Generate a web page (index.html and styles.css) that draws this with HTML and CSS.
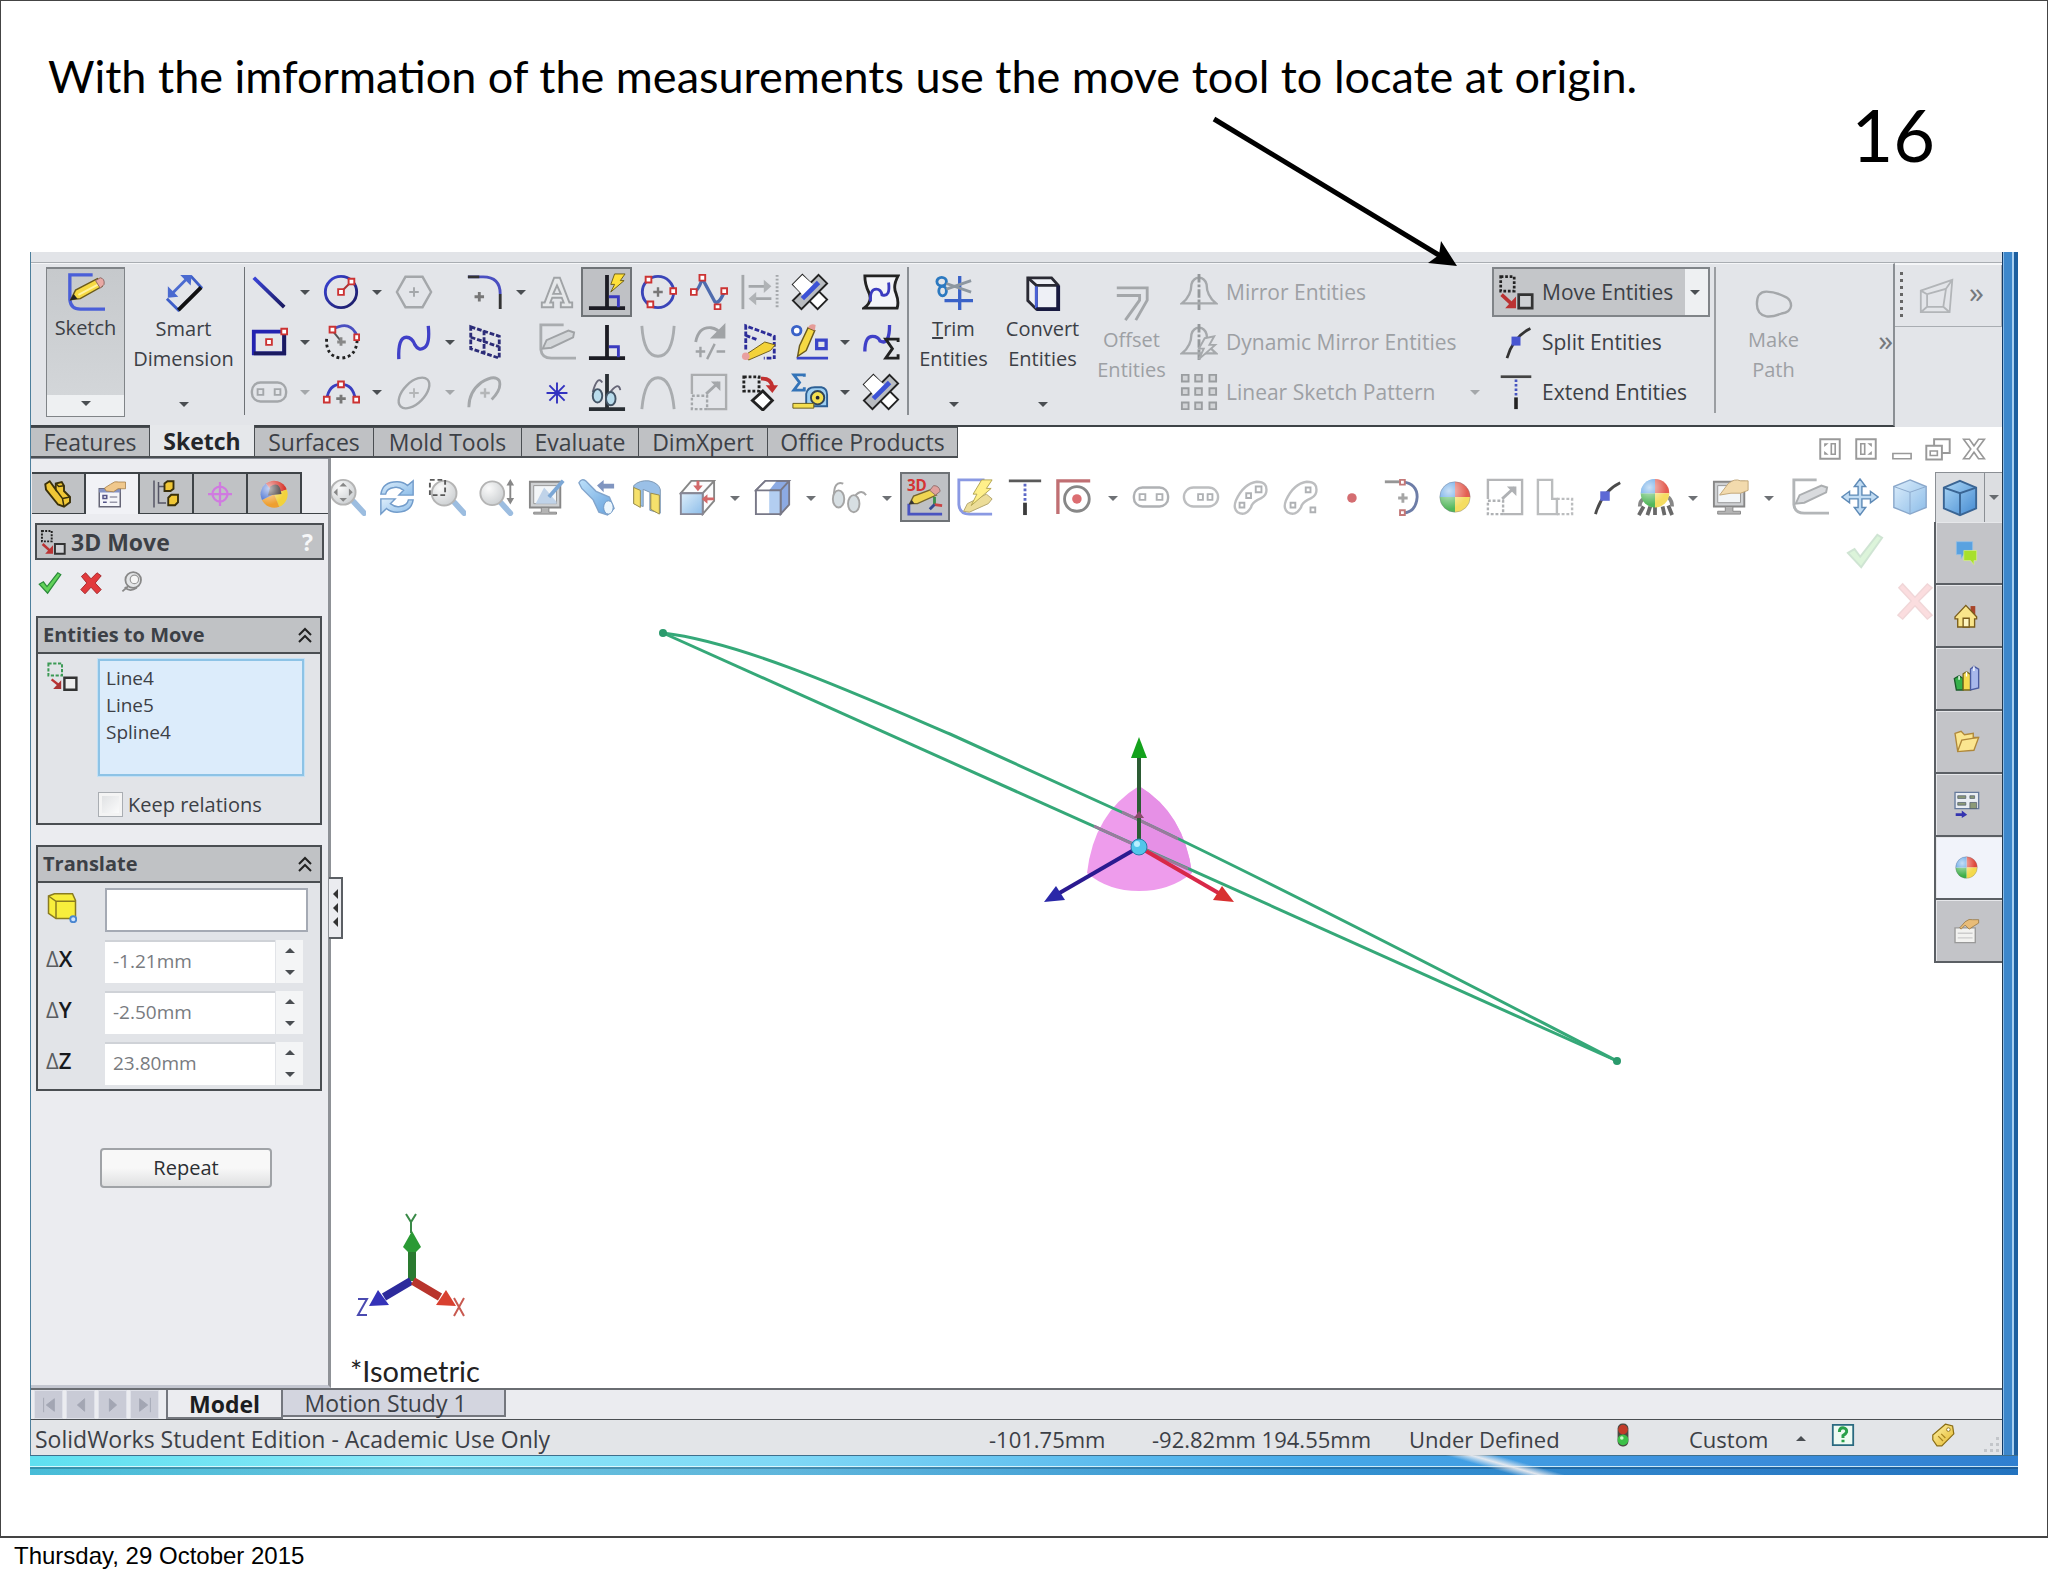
FILE: index.html
```html
<!DOCTYPE html>
<html lang="en">
<head>
<meta charset="utf-8">
<title>Move tool – slide 16</title>
<link rel="stylesheet" href="styles.css">
</head>
<body>
<svg class="sprite" aria-hidden="true">
  <defs>
    <linearGradient id="gBlue" x1="0" y1="0" x2="1" y2="1"><stop offset="0" stop-color="#d9ecfb"/><stop offset="1" stop-color="#7db4e6"/></linearGradient>
    <linearGradient id="gDeep" x1="0" y1="0" x2="1" y2="1"><stop offset="0" stop-color="#a8d8fa"/><stop offset="1" stop-color="#2f7fd0"/></linearGradient>
    <linearGradient id="gYel" x1="0" y1="0" x2="1" y2="1"><stop offset="0" stop-color="#fff4a8"/><stop offset="1" stop-color="#e3b62a"/></linearGradient>
    <linearGradient id="gInk" x1="0" y1="0" x2="1" y2="1"><stop offset="0" stop-color="#3a44d8"/><stop offset="1" stop-color="#1a1a60"/></linearGradient>
    <radialGradient id="gLens" cx=".35" cy=".3" r=".8"><stop offset="0" stop-color="#fafafa"/><stop offset="1" stop-color="#c2c6c9"/></radialGradient>
    <radialGradient id="gShine" cx=".3" cy=".3" r=".6"><stop offset="0" stop-color="#fff" stop-opacity=".7"/><stop offset="1" stop-color="#fff" stop-opacity="0"/></radialGradient>
  </defs>
  <symbol id="pencil" viewBox="0 0 40 40"><path d="M2 28 7 18 29 7 34 15 12 26Z" fill="#f6d943" stroke="#6b5a1a" stroke-width="1.5"/><path d="M10 22 31 11" stroke="#fff3a0" stroke-width="2"/><path d="M27 8 32 5Q38 5 38 11L33 16Z" fill="#e9a9a4" stroke="#8a6664"/><path d="M2 28 5 22 9 27Z" fill="#222"/></symbol>
  <symbol id="sketch" viewBox="0 0 40 40"><path d="M27 2H3V28Q4 38 14 38H40" fill="none" stroke="#4a5fd8" stroke-width="3.5"/><path d="M4 28 9 18 32 6 37 14 14 27Z" fill="#f6d943" stroke="#6b5a1a" stroke-width="1.500"/><path d="M12 23 33 12" stroke="#fff3a0" stroke-width="2"/><path d="M30 8 35 5Q40 6 39 12L35 16Z" fill="#e9a9a4" stroke="#8a6664"/><path d="M3 29 7 22 11 27Z" fill="#222"/></symbol>
  <symbol id="dim" viewBox="0 0 40 40"><path d="M27 2 38 14 14 38 2 26" fill="none" stroke="#3f5fc8" stroke-width="3"/><path d="M38 14 14 38" stroke="#111" stroke-width="4"/><path d="M6 22 24 4" stroke="#4a6ad0" stroke-width="3"/><path d="M3 25V13L14 24ZM28 1H16L27 12Z" fill="#4a6ad0"/></symbol>
  <symbol id="line" viewBox="0 0 40 40"><path d="M4 5 36 36" stroke="url(#gInk)" stroke-width="4"/></symbol>
  <symbol id="circle" viewBox="0 0 40 40"><circle cx="20" cy="20" r="16.500" fill="none" stroke="url(#gInk)" stroke-width="3"/><path d="m20 20 10-10" stroke="#a33" stroke-width="2"/><g fill="#fff" stroke="#c33" stroke-width="2"><path d="M17 17h6v6h-6zM28 6h6v6h-6z"/></g></symbol>
  <symbol id="hex" viewBox="0 0 40 40"><path d="M11 4h18l9 16-9 16H11L2 20Z" fill="none" stroke="#a4a7aa" stroke-width="2.500"/><path d="M20 15v10M15 20h10" stroke="#a4a7aa" stroke-width="2"/></symbol>
  <symbol id="fillet" viewBox="0 0 40 40"><path d="M2 4H18Q36 4 36 22" fill="none" stroke="#4a4fc0" stroke-width="3"/><path d="M2 4H14M36 22V38" stroke="#333" stroke-width="3"/><path d="M14 20v10M9 25h10" stroke="#777" stroke-width="3"/></symbol>
  <symbol id="letter" viewBox="0 0 40 40"><path d="M17 5h6l10 26h3v5H24v-5h3l-2-5H15l-2 5h3v5H4v-5h3ZM20 13l-4 9h8Z" fill="#e6e8ea" stroke="#a0a3a6" stroke-width="2"/></symbol>
  <symbol id="perp" viewBox="0 0 40 40"><path d="M20 2V37M1 37H39" stroke="#1c1c24" stroke-width="4" fill="none"/><path d="M22 25H32V36" fill="none" stroke="#3b3bc0" stroke-width="3"/></symbol>
  <symbol id="perpq" viewBox="0 0 40 40"><path d="M20 2V37M1 37H39" stroke="#1c1c24" stroke-width="4" fill="none"/><path d="M22 25H32V36" fill="none" stroke="#3b3bc0" stroke-width="3"/><path d="M28 1H39L34 8H38L24 20 28 12H24Z" fill="#ffe13a" stroke="#6b5d14"/></symbol>
  <symbol id="circ3" viewBox="0 0 40 40"><circle cx="20" cy="20" r="16.500" fill="none" stroke="#3a45b8" stroke-width="3"/><path d="M20 15v10M15 20h10" stroke="#777" stroke-width="2.500"/><g fill="#fff" stroke="#c33" stroke-width="2"><path d="M7 4h6v6H7zM33 16h6v6h-6zM9 30h6v6H9z"/></g></symbol>
  <symbol id="poly" viewBox="0 0 40 40"><path d="M4 20Q8 20 13 6L26 30Q30 34 36 20" fill="none" stroke="#4f6cae" stroke-width="3.500"/><g fill="#fff" stroke="#c33" stroke-width="2"><path d="M1 17h6v6H1zM10 2h6v6h-6zM26 33h6v5h-6zM33 16h6v6h-6z"/></g></symbol>
  <symbol id="flip" viewBox="0 0 40 40"><path d="M2 2V38" stroke="#a4a7aa" stroke-width="3"/><path d="M38 2V38" stroke="#a4a7aa" stroke-width="3" stroke-dasharray="2 2"/><path d="M8 14H26M14 27H32" stroke="#a4a7aa" stroke-width="3"/><path d="M24 7 32 14 24 21ZM16 20 8 27 16 34Z" fill="#b0b3b6"/></symbol>
  <symbol id="cross" viewBox="0 0 40 40"><path d="M12 2 38 28 28 38 2 12Z" fill="#fff" stroke="#222" stroke-width="2"/><path d="M29 2 38 11 11 38 2 29Z" fill="#b9bcc0" stroke="#222" stroke-width="2"/><path d="M12 2 24 13 13 24 2 12Z" fill="#fff"/><path d="M12 27 29 10" stroke="#3c52d6" stroke-width="5"/></symbol>
  <symbol id="surf" viewBox="0 0 40 40"><path d="M3 3H38Q32 14 36 22 39 30 37 37H2Q12 30 7 20 3 12 3 3Z" fill="#f3f4f8" stroke="#222" stroke-width="3"/><path d="M9 30Q8 17 15 17 20 17 21 23 30 26 28 10" fill="none" stroke="#3b3bc0" stroke-width="3"/></symbol>
  <symbol id="rect" viewBox="0 0 40 40"><path d="M4 9H36V32H4Z" fill="none" stroke="#2323b0" stroke-width="4"/><path d="M4 32H36V9" fill="none" stroke="#1a1a60" stroke-width="4"/><g fill="#fff" stroke="#c33" stroke-width="2"><path d="M17 17h6v6h-6zM33 6h6v6h-6z"/></g></symbol>
  <symbol id="carc" viewBox="0 0 40 40"><path d="M11 7Q30-4 37 14" fill="none" stroke="#4a4fc0" stroke-width="3"/><path d="M37 18Q36 36 20 37 3 35 5 15" fill="none" stroke="#222" stroke-width="3" stroke-dasharray="3 3"/><path d="M11 8 20 19" stroke="#555" stroke-width="2"/><path d="M20 15v9M16 20h9" stroke="#888" stroke-width="3"/><g fill="#fff" stroke="#c33" stroke-width="2"><path d="M8 4h6v6H8zM34 12h5v6h-5z"/></g></symbol>
  <symbol id="spline" viewBox="0 0 40 40"><path d="M4 38Q3 15 12 15 18 15 21 23 25 30 31 26 37 22 35 3" fill="none" stroke="#4040c8" stroke-width="3.500"/></symbol>
  <symbol id="plane" viewBox="0 0 40 40"><path d="M5 4 35 14V37L5 27ZM5 15 35 25M19 8V32" fill="none" stroke="#2c2c78" stroke-width="3" stroke-dasharray="5 2"/></symbol>
  <symbol id="sketchg" viewBox="0 0 40 40"><path d="M27 2H3V28Q4 37 14 37H40" fill="none" stroke="#a9acaf" stroke-width="3"/><path d="M5 27 9 18 32 8 38 10 37 15 14 26Z" fill="#d4d7da" stroke="#a0a3a6" stroke-width="2"/></symbol>
  <symbol id="ucurve" viewBox="0 0 40 40"><path d="M3 3Q5 35 20 35T37 3" fill="none" stroke="#a9acaf" stroke-width="3"/></symbol>
  <symbol id="ncurve" viewBox="0 0 40 40"><path d="M3 38Q6 5 20 5T37 38" fill="none" stroke="#a9acaf" stroke-width="3"/></symbol>
  <symbol id="plusminus" viewBox="0 0 40 40"><path d="M6 20Q9 4 22 5 29 6 33 12" fill="none" stroke="#a0a3a6" stroke-width="3"/><path d="M36 3V15H24ZM6 30H16M11 25V36M18 38 26 22M28 30H37" fill="#a0a3a6" stroke="#a0a3a6" stroke-width="2.500"/></symbol>
  <symbol id="planepen" viewBox="0 0 40 40"><path d="M5 28V3L35 14V38M5 13 18 18M32 37H24" fill="none" stroke="#2c2c98" stroke-width="3" stroke-dasharray="5 2"/><path d="M4 34 25 20 36 23 31 29 8 39Z" fill="#f3d23a" stroke="#6b5a1a"/><circle cx="5" cy="35" r="4" fill="#e9a0a0"/></symbol>
  <symbol id="rapid" viewBox="0 0 40 40"><circle cx="6" cy="8" r="4.500" fill="#fff" stroke="#3a62c8" stroke-width="3"/><path d="M27 18H37V27H27Z" fill="none" stroke="#3a45c8" stroke-width="3.500"/><path d="M6 37H39" stroke="#3a45c8" stroke-width="3"/><path d="M7 35 9 24 18 5 25 8 16 29Z" fill="#f6d943" stroke="#6b5a1a" stroke-width="1.500"/><path d="M18 5Q20 0 26 2L25 8Z" fill="#e59c98"/></symbol>
  <symbol id="splsum" viewBox="0 0 40 40"><path d="M3 30Q3 14 11 14 17 14 19 19 29 24 29 2" fill="none" stroke="#4040c8" stroke-width="3.500"/><path d="M38 20V17H25L32 27 25 37H38V33" fill="none" stroke="#222" stroke-width="3"/></symbol>
  <symbol id="slot" viewBox="0 0 40 40"><rect x="2" y="10" width="36" height="20" rx="9" fill="none" stroke="#a4a7aa" stroke-width="2.500"/><path d="M8 17h6v6H8zM26 17h6v6h-6z" fill="none" stroke="#a4a7aa" stroke-width="2"/></symbol>
  <symbol id="slot2" viewBox="0 0 40 40"><rect x="2" y="10" width="36" height="20" rx="10" fill="none" stroke="#b4b6b8" stroke-width="2.500"/><path d="M17 17h5v6h-5zM27 17h5v6h-5z" fill="none" stroke="#a4a7aa" stroke-width="2"/></symbol>
  <symbol id="slot3" viewBox="0 0 40 40"><path d="M4 24Q12 6 26 4 38 4 36 15 35 20 27 23 21 26 20 31 14 41 6 36 1 32 4 24Z" fill="none" stroke="#b4b6b8" stroke-width="2.500"/><path d="M25 9h6v6h-6zM15 16h5v5h-5zM8 26h5v5H8z" fill="none" stroke="#a4a7aa" stroke-width="2"/></symbol>
  <symbol id="slot4" viewBox="0 0 40 40"><path d="M4 24Q12 6 26 4 38 4 36 15 35 20 27 23 21 26 20 31 14 41 6 36 1 32 4 24Z" fill="none" stroke="#b4b6b8" stroke-width="2.500"/><path d="M25 10h5v5h-5zM9 26h5v5H9zM30 31h5v5h-5z" fill="none" stroke="#a4a7aa" stroke-width="2"/></symbol>
  <symbol id="arc3" viewBox="0 0 40 40"><path d="M5 28Q7 12 20 12T35 28" fill="none" stroke="#3a3fc0" stroke-width="3"/><path d="M20 23v9M15 27h10" stroke="#777" stroke-width="3"/><g fill="#fff" stroke="#c33" stroke-width="2"><path d="M17 9h6v6h-6zM2 25h6v6H2zM33 25h6v6h-6z"/></g></symbol>
  <symbol id="ellipse" viewBox="0 0 40 40"><ellipse cx="20" cy="21" rx="20" ry="11" transform="rotate(-45 20 21)" fill="none" stroke="#a4a7aa" stroke-width="2.500"/><path d="M20 16v10M15 21h10" stroke="#b4b6b8" stroke-width="2"/></symbol>
  <symbol id="parc" viewBox="0 0 40 40"><path d="M3 36Q3 20 16 10 30 1 35 8 38 17 27 28" fill="none" stroke="#a4a7aa" stroke-width="3"/><path d="M20 16v10M15 21h10" stroke="#b4b6b8" stroke-width="2.500"/></symbol>
  <symbol id="star" viewBox="0 0 40 40"><path d="M20 10V32M9 21H31M12 13 28 29M28 13 12 29" stroke="#3232c0" stroke-width="2"/></symbol>
  <symbol id="perpg" viewBox="0 0 40 40"><path d="M20 1V37M1 38H39" stroke="#2a2f34" stroke-width="4"/><path d="M5 20Q10 2 15 10M22 22Q32 8 34 18" fill="none" stroke="#667" stroke-width="2"/><ellipse cx="10" cy="24" rx="5" ry="7" fill="#b9dcec" stroke="#456" stroke-width="2"/><ellipse cx="24" cy="27" rx="5" ry="7" fill="#b9dcec" stroke="#456" stroke-width="2"/></symbol>
  <symbol id="scale" viewBox="0 0 40 40"><path d="M2 22V2H38V38H18" fill="none" stroke="#abadaf" stroke-width="2.500"/><path d="M2 24H18V38H2Z" fill="none" stroke="#a4a7aa" stroke-width="2.500" stroke-dasharray="3 2"/><path d="M17 22 30 10" stroke="#a4a7aa" stroke-width="3"/><path d="M22 9H32V19Z" fill="#a4a7aa"/></symbol>
  <symbol id="rotent" viewBox="0 0 40 40"><path d="M3 4H19V19H3Z" fill="none" stroke="#222" stroke-width="3" stroke-dasharray="3 2"/><path d="M21 6Q31 5 33 14" fill="none" stroke="#c23030" stroke-width="4"/><path d="M26 13H39L33 21Z" fill="#c23030"/><path d="M23 19 33 29 23 39 12 29Z" fill="#fff" stroke="#222" stroke-width="3"/></symbol>
  <symbol id="tape" viewBox="0 0 40 40"><path d="M14 4V2H3L9 10 3 18H14V15" fill="none" stroke="#3474b8" stroke-width="3"/><path d="M16 35V22Q17 15 25 15H32Q38 16 38 23V35Z" fill="#9fd0f2" stroke="#2d5f94" stroke-width="2"/><circle cx="28" cy="26" r="7" fill="#f4df50" stroke="#345" stroke-width="2"/><circle cx="28" cy="26" r="2" fill="#223"/><path d="M2 32H24V37H2Z" fill="#f4df50" stroke="#665a1a"/></symbol>
  <symbol id="trim" viewBox="0 0 40 40"><path d="M26 2V38M10 28H40" stroke="#3a62c8" stroke-width="3.500"/><ellipse cx="7" cy="8" rx="5" ry="4.500" fill="none" stroke="#2c79c0" stroke-width="3"/><ellipse cx="8" cy="18" rx="4" ry="5" fill="none" stroke="#2c79c0" stroke-width="3"/><path d="M12 10 38 19M12 16 38 7" stroke="#8d97a0" stroke-width="3"/></symbol>
  <symbol id="convert" viewBox="0 0 40 40"><path d="M4 4H29L36 12V37H13L4 28Z" fill="#eef0f6" stroke="#2a2a34" stroke-width="3"/><path d="M4 4 13 12M13 36V12H36" stroke="#2a2a34" stroke-width="3" fill="none"/><path d="M13 13V36" stroke="#4a62d8" stroke-width="3"/><path d="M36 12V37H13" fill="none" stroke="#181a40" stroke-width="4"/></symbol>
  <symbol id="offset" viewBox="0 0 40 40"><path d="M4 3H36V16L24 37M4 11H28V16L13 37" fill="none" stroke="#a4a7aa" stroke-width="3"/></symbol>
  <symbol id="mirror" viewBox="0 0 40 40"><path d="M2 32Q12 24 12 12 14 5 20 5T28 12Q28 24 38 32Z" fill="none" stroke="#a6a9ac" stroke-width="2.500"/><path d="M20 1V39" stroke="#94989b" stroke-width="3" stroke-dasharray="9 2 3 2"/></symbol>
  <symbol id="dmirror" viewBox="0 0 40 40"><path d="M2 32Q12 24 12 12 14 5 20 5T28 12Q28 24 38 32Z" fill="none" stroke="#a6a9ac" stroke-width="2.500"/><path d="M20 1V39" stroke="#94989b" stroke-width="3" stroke-dasharray="9 2 3 2"/><path d="M26 16 36 14 31 23H37L20 38 25 27H20Z" fill="#e3e5e8" stroke="#a6a9ac" stroke-width="2"/></symbol>
  <symbol id="pattern" viewBox="0 0 40 40"><path d="M2 2h7v7H2zM16 2h7v7h-7zM31 2h7v7h-7zM2 16h7v7H2zM16 16h7v7h-7zM31 16h7v7h-7zM2 31h7v7H2zM16 31h7v7h-7zM31 31h7v7h-7z" fill="#d3d5d8" stroke="#9a9da0" stroke-width="2"/></symbol>
  <symbol id="move" viewBox="0 0 40 40"><path d="M3 3H18V19H3Z" fill="none" stroke="#222" stroke-width="3" stroke-dasharray="3 2"/><path d="M4 23 16 34" stroke="#b33" stroke-width="4"/><path d="M20 25V38H8Z" fill="#b33"/><path d="M23 23H38V38H23Z" fill="#cfd1d4" stroke="#333" stroke-width="3"/></symbol>
  <symbol id="moveg" viewBox="0 0 40 40"><path d="M3 3H20V18H3Z" fill="none" stroke="#3c9a55" stroke-width="2.500" stroke-dasharray="4 2"/><path d="M7 23 17 31" stroke="#b33" stroke-width="3"/><path d="M19 24V35H9Z" fill="#a33"/><path d="M23 21H38V36H23Z" fill="#eee" stroke="#333" stroke-width="3"/></symbol>
  <symbol id="split" viewBox="0 0 40 40"><path d="M10 38Q17 14 36 5" fill="none" stroke="#333" stroke-width="3"/><path d="M15 14H25V24H15Z" fill="#4755d0"/></symbol>
  <symbol id="extend" viewBox="0 0 40 40"><path d="M3 3H37" stroke="#444" stroke-width="3"/><path d="M20 6V26" stroke="#4755c0" stroke-width="3" stroke-dasharray="3 2"/><path d="M20 26V39" stroke="#222" stroke-width="4"/></symbol>
  <symbol id="path" viewBox="0 0 40 40"><path d="M2 20Q2 7 12 7 22 7 33 13 38 16 38 22 37 29 28 30 18 34 12 33 2 31 2 20Z" fill="none" stroke="#a4a7aa" stroke-width="2.500"/></symbol>
  <symbol id="inst" viewBox="0 0 40 40"><path d="M2 14 37 2 34 38H2ZM9 18V32H27L30 12ZM2 14 9 18M27 32 34 38M9 32 2 38M30 12 37 2" fill="none" stroke="#b2b5b8" stroke-width="2"/></symbol>
  <symbol id="part" viewBox="0 0 40 40"><path d="M3 7 9 3 17 14 17 6 25 4 28 9V16L36 24V31L28 37 20 34 4 14Z" fill="#f0c736" stroke="#3a300a" stroke-width="2.500"/><path d="M17 14 26 26 28 37M26 26 36 24M17 6 21 10 28 9" fill="none" stroke="#3a300a" stroke-width="2"/></symbol>
  <symbol id="prop" viewBox="0 0 40 40"><path d="M3 13H31V37H3Z" fill="#f5f6fa" stroke="#667" stroke-width="2"/><path d="M3 13H31V18H3Z" fill="#8593c4"/><path d="M8 22H13V26H8ZM8 31H13" stroke="#558" fill="none" stroke-width="2"/><path d="M17 24H27M17 31H27" stroke="#99a" stroke-width="2"/><path d="M10 12 18 7Q24 2 29 4H38V13H28L22 17 12 16Z" fill="#f0c88c" stroke="#a07a44"/></symbol>
  <symbol id="conf" viewBox="0 0 40 40"><path d="M4 2V38M10 4V32H20M10 10H18" stroke="#556" stroke-width="2" fill="none"/><path d="M18 6 22 3H30V13L26 16H18ZM23 25 27 21H36V31L32 35H23Z" fill="#f0c736" stroke="#3a300a" stroke-width="2.500"/></symbol>
  <symbol id="target" viewBox="0 0 40 40"><circle cx="20" cy="20" r="10" fill="none" stroke="#d07ae0" stroke-width="3"/><path d="M20 4V36M4 20H36M13 20H27" stroke="#d07ae0" stroke-width="3"/></symbol>
  <symbol id="ball" viewBox="0 0 40 40"><path d="M20 20V4A16 16 0 0 1 36 20Z" fill="#e0483a"/><path d="M20 20H36A16 16 0 0 1 20 36Z" fill="#f4d94c"/><path d="M20 20V36A16 16 0 0 1 4 20Z" fill="#3cae45"/><path d="M20 20H4A16 16 0 0 1 20 4Z" fill="#3c8fe0"/><circle cx="20" cy="20" r="16" fill="url(#gShine)" stroke="#667" stroke-opacity=".4"/></symbol>
  <symbol id="ball2" viewBox="0 0 40 40"><path d="M20 20 9 6A18 18 0 0 1 37 14Z" fill="#d8382e"/><path d="M20 20 37 14A18 18 0 0 1 27 37Z" fill="#f2d23c"/><path d="M20 20 27 37A18 18 0 0 1 4 28Z" fill="#ee9f30"/><path d="M20 20 4 28A18 18 0 0 1 9 6Z" fill="#3a66d0"/><path d="M12 22 15 10Q24 4 28 12L30 20Z" fill="#3a3234"/><circle cx="20" cy="20" r="18" fill="url(#gShine)"/></symbol>
  <symbol id="zfit" viewBox="0 0 40 40"><path d="M27 25 38 37" stroke="#8fb4dc" stroke-width="6" stroke-linecap="round"/><circle cx="16" cy="15" r="13" fill="url(#gLens)" stroke="#aaa" stroke-width="2"/><path d="M16 5l4 4h-8zM16 25l4-4h-8zM6 15l4-4v8zM26 15l-4-4v8z" fill="#777"/></symbol>
  <symbol id="rot" viewBox="0 0 40 40"><path d="M3 17Q5 4 20 4 27 4 31 8L37 3V18H22L27 13Q22 9 17 10 9 11 8 17Z" fill="url(#gBlue)" stroke="#5f8fc4" stroke-width="1.500"/><path d="M37 23Q35 36 20 36 13 36 9 32L3 38V22H18L13 27Q18 31 23 30 31 29 32 23Z" fill="url(#gBlue)" stroke="#5f8fc4" stroke-width="1.500"/></symbol>
  <symbol id="zarea" viewBox="0 0 40 40"><path d="M28 26 38 37" stroke="#8fb4dc" stroke-width="6" stroke-linecap="round"/><circle cx="17" cy="16" r="13" fill="url(#gLens)" stroke="#aaa" stroke-width="2"/><path d="M2 2H18V18H2Z" fill="none" stroke="#444" stroke-width="2" stroke-dasharray="5 3"/></symbol>
  <symbol id="zdyn" viewBox="0 0 40 40"><path d="M24 26 34 37" stroke="#8fb4dc" stroke-width="6" stroke-linecap="round"/><circle cx="15" cy="16" r="12.500" fill="url(#gLens)" stroke="#aaa" stroke-width="2"/><path d="M34 5V24" stroke="#777" stroke-width="2"/><path d="M34 1l4 7h-8zM34 28l4-7h-8z" fill="#777"/></symbol>
  <symbol id="monitor" viewBox="0 0 40 40"><path d="M2 4H34V31H2Z" fill="#c9cbce" stroke="#777" stroke-width="2"/><path d="M6 8H30V27H6Z" fill="#f2f5f8" stroke="#888"/><path d="M8 27 17 10 30 25V27Z" fill="#b8cde6"/><path d="M22 20 37 3" stroke="#6a9cd0" stroke-width="4"/><path d="M14 31H22V36H30V38H6V36H14Z" fill="#aaa" stroke="#777"/></symbol>
  <symbol id="torch" viewBox="0 0 40 40"><path d="M1 5Q4 0 8 3L19 14 33 20 38 32 31 39 22 36 16 23 4 11Z" fill="url(#gDeep)" stroke="#5a88bc" stroke-width="1.500" opacity=".85"/><ellipse cx="32" cy="31" rx="5" ry="7" fill="#eaf5fd" stroke="#5a88bc"/><path d="M20 8 27 2V6H38V11H27V15Z" fill="#6f87b8"/></symbol>
  <symbol id="section" viewBox="0 0 40 40"><path d="M6 8Q12 2 22 3 32 5 34 12V37L23 34V15L16 12V30L6 27Z" fill="#8db8e4" stroke="#6a88a8"/><path d="M6 10 13 13V31L6 27ZM24 16 33 18V38L24 33Z" fill="#f5dd58" stroke="#8a7a30"/></symbol>
  <symbol id="orient" viewBox="0 0 40 40"><path d="M3 16 14 3H38L26 16ZM26 16V38L38 24V3" fill="#fbfcfd" stroke="#777" stroke-width="2"/><path d="M3 16H26V38H3Z" fill="url(#gBlue)" stroke="#778" stroke-width="2"/><path d="M21 3V10M38 22H30" stroke="#c55" stroke-width="3"/><path d="M16 8h10l-5 6zM31 17v10l-6-5z" fill="#c55"/></symbol>
  <symbol id="cube" viewBox="0 0 40 40"><path d="M2 13 12 3H37L28 13ZM28 13V38L37 28V3" fill="#7d9fe0" stroke="#667" stroke-width="2"/><path d="M2 13H28V38H2Z" fill="#fff"/><path d="M16 13H28V38H16Z" fill="#a9c8f0"/><path d="M12 3H24L16 13H2Z" fill="#fff"/><path d="M2 13H28V38H2ZM2 13 12 3H37" fill="none" stroke="#667" stroke-width="2"/></symbol>
  <symbol id="glasses" viewBox="0 0 40 40"><path d="M4 20Q4 2 14 6M24 22Q32 10 38 18" fill="none" stroke="#999" stroke-width="2"/><ellipse cx="9" cy="22" rx="6" ry="9" fill="#d2dbe0" stroke="#999" stroke-width="2"/><ellipse cx="25" cy="27" rx="6" ry="9" fill="#d2dbe0" stroke="#999" stroke-width="2"/></symbol>
  <symbol id="light" viewBox="0 0 40 40"><path d="M30 2H3V28Q4 38 14 38H38" fill="none" stroke="#7a8be0" stroke-width="3"/><path d="M8 35 12 27 32 17 38 22 34 27 14 36Z" fill="#ead98c" stroke="#a89858"/><path d="M27 2H38L32 11H37L16 29 22 17H18Z" fill="#ffee7a" stroke="#a8983a"/></symbol>
  <symbol id="circtan" viewBox="0 0 40 40"><path d="M2 38V3H36" fill="none" stroke="#b85c60" stroke-width="3.500"/><circle cx="22" cy="22" r="13" fill="#fff" stroke="#777" stroke-width="3"/><circle cx="22" cy="22" r="5" fill="#d85a5e"/></symbol>
  <symbol id="dot" viewBox="0 0 40 40"><circle cx="21" cy="21" r="5" fill="#cf5a5e"/></symbol>
  <symbol id="tarc" viewBox="0 0 40 40"><path d="M3 4H22" stroke="#888" stroke-width="3"/><path d="M22 4Q37 6 37 20 36 36 22 37" fill="none" stroke="#5a6c9c" stroke-width="3"/><path d="M22 16v10M17 21h10" stroke="#999" stroke-width="3"/><path d="M19 2h5v5h-5zM19 34h5v5h-5z" fill="#fff" stroke="#b66" stroke-width="2"/></symbol>
  <symbol id="step" viewBox="0 0 40 40"><path d="M2 2H17V22H22V38H2Z" fill="none" stroke="#b2b4b6" stroke-width="2.500"/><path d="M22 22H38V38H22" fill="none" stroke="#b2b4b6" stroke-width="2.500" stroke-dasharray="3 2"/></symbol>
  <symbol id="scene" viewBox="0 0 40 40"><path d="M3 39 8 30M12 39 15 30M20 39V30M28 30 30 39M34 29 38 39" stroke="#555" stroke-width="4"/><path d="M4 30Q4 24 8 22M38 30Q38 24 34 20" fill="none" stroke="#777" stroke-width="4"/><path d="M20 16V1A15 15 0 0 1 35 16Z" fill="#e0483a"/><path d="M20 16H35A15 15 0 0 1 20 31Z" fill="#f4d94c"/><path d="M20 16V31A15 15 0 0 1 5 16Z" fill="#3cae45"/><path d="M20 16H5A15 15 0 0 1 20 1Z" fill="#3c8fe0"/><circle cx="20" cy="16" r="15" fill="url(#gShine)"/></symbol>
  <symbol id="monhand" viewBox="0 0 40 40"><path d="M2 4H34V30H2Z" fill="#c9cbce" stroke="#777" stroke-width="2"/><path d="M6 8H30V26H6Z" fill="#f2f5f8" stroke="#888"/><path d="M8 18 17 6Q24 0 30 3H38V13L30 16H20Z" fill="#f1d6a2" stroke="#b89a66"/><path d="M14 30H22V35H30V38H6V35H14Z" fill="#aaa" stroke="#777"/></symbol>
  <symbol id="pan" viewBox="0 0 40 40"><path d="M20 1 26 9H22V18H31V14L39 20 31 26V22H22V31H26L20 39 14 31H18V22H9V26L1 20 9 14V18H18V9H14Z" fill="#b9d8f2" stroke="#4a7cae" stroke-width="1.500"/></symbol>
  <symbol id="box3" viewBox="0 0 40 40"><path d="M20 2 37 9V31L20 38 3 31V9Z" fill="url(#gBlue)" stroke="#7a9cc4" stroke-width="1.500"/><path d="M3 9 20 15 37 9M20 15V38" stroke="#7a9cc4" fill="none"/></symbol>
  <symbol id="box4" viewBox="0 0 40 40"><path d="M20 2 37 9V31L20 38 3 31V9Z" fill="url(#gDeep)" stroke="#24558a" stroke-width="2"/><path d="M3 9 20 15 37 9M20 15V38" stroke="#24558a" stroke-width="2" fill="none"/></symbol>
  <symbol id="check" viewBox="0 0 40 40"><path d="M2 22 9 18 15 26 33 3 38 6 16 37Z" fill="#62d25a" stroke="#2b8a3a" stroke-width="2"/></symbol>
  <symbol id="xmark" viewBox="0 0 40 40"><path d="M4 9 11 3 20 13 30 3 37 8 27 20 37 31 30 38 20 27 10 38 3 31 13 20Z" fill="#e23a3c" stroke="#a02428" stroke-width="1.500"/></symbol>
  <symbol id="xthin" viewBox="0 0 40 40"><path d="M3 6 7 2 20 16 33 2 38 6 24 20 38 35 33 39 20 25 7 39 2 35 16 20Z" fill="#ee6a70" stroke="#c04a50" stroke-width="1.500"/></symbol>
  <symbol id="pin" viewBox="0 0 40 40"><circle cx="22" cy="15" r="13" fill="#e4e6e8" stroke="#888" stroke-width="3"/><circle cx="24" cy="14" r="7" fill="#f6f6f6" stroke="#999" stroke-width="2"/><path d="M14 25 4 34M8 27Q16 36 28 28" stroke="#888" stroke-width="3" fill="none"/></symbol>
  <symbol id="ybox" viewBox="0 0 40 40"><path d="M2 4 10 1H34L38 10V34H12L2 27Z" fill="#f8ee3c" stroke="#8a7c20" stroke-width="2"/><path d="M2 4 12 11H38M12 11V34" stroke="#8a7c20" fill="none" stroke-width="2"/><circle cx="35" cy="35" r="4" fill="#cfe4ff" stroke="#4a86d0" stroke-width="2.500"/></symbol>
  <symbol id="chat" viewBox="0 0 40 40"><path d="M5 4H29V23H16L12 29V23H5Z" fill="#5aa2e0" stroke="#90c0ea"/><path d="M16 17H35V32H31V38L26 32H16Z" fill="#a8e02c" stroke="#d8f090"/></symbol>
  <symbol id="home" viewBox="0 0 40 40"><path d="M26 6H33V20H26Z" fill="#a8452a"/><path d="M3 22 19 5 35 22V25H32V37H7V25H3Z" fill="#f9e58a" stroke="#7a5c1a" stroke-width="2"/><path d="M15 24H24V37H15Z" fill="#fdf5c0" stroke="#7a5c1a" stroke-width="2"/></symbol>
  <symbol id="books" viewBox="0 0 40 40"><path d="M2 20 9 16 15 20V37H5Z" fill="#35b04a" stroke="#1a5a2a" stroke-width="2"/><path d="M15 13 20 10 26 14V37H15Z" fill="#f5dc50" stroke="#7a6a1a" stroke-width="2"/><path d="M26 6 31 2 38 6V34L26 37Z" fill="#a8b8ec" stroke="#4a5aa0" stroke-width="2"/><path d="M9 16V22M20 10V17M31 2V9" stroke="#fff" stroke-width="2"/></symbol>
  <symbol id="folder" viewBox="0 0 40 40"><path d="M3 8 12 5 17 10 30 8V14H38L31 33 7 35Z" fill="#fbe690" stroke="#b0883a" stroke-width="2"/><path d="M7 34 13 18 38 14" fill="none" stroke="#b0883a" stroke-width="2"/></symbol>
  <symbol id="palette" viewBox="0 0 40 40"><path d="M3 2H38V26H3Z" fill="#e9edf2" stroke="#667a9c" stroke-width="2"/><path d="M7 7H19V11H7ZM7 17H19V21H7ZM25 7H32V11H25ZM25 17H35V26H25Z" fill="#8c9a78" stroke="#4a5668"/><path d="M4 33H13V29L21 35 13 40V37H4Z" fill="#3434b0"/></symbol>
  <symbol id="hand" viewBox="0 0 40 40"><path d="M3 16H33V38H3Z" fill="#f2f2f0" stroke="#999" stroke-width="2"/><path d="M7 24H29M7 31H29" stroke="#ccc" stroke-width="2"/><path d="M10 16 18 7Q24 2 29 4H38V9L30 14 24 18 18 12 12 18Z" fill="#e8bc78" stroke="#8a6a34"/></symbol>
  <symbol id="winl" viewBox="0 0 40 40"><path d="M5 5H35V35H5Z" fill="#fff" stroke="#999" stroke-width="3"/><path d="M22 12H28V28H22Z" fill="none" stroke="#999" stroke-width="2.500"/><path d="M11 11H18L11 17ZM11 29H18L11 23Z" fill="#999"/></symbol>
  <symbol id="winr" viewBox="0 0 40 40"><path d="M5 5H35V35H5Z" fill="#fff" stroke="#999" stroke-width="3"/><path d="M12 12H18V28H12Z" fill="none" stroke="#999" stroke-width="2.500"/><path d="M29 11H22L29 17ZM29 29H22L29 23Z" fill="#999"/></symbol>
  <symbol id="wmin" viewBox="0 0 40 40"><path d="M6 27H34V35H6Z" fill="#fff" stroke="#999" stroke-width="2.500"/></symbol>
  <symbol id="wres" viewBox="0 0 40 40"><path d="M14 5H38V26H14Z" fill="#fff" stroke="#999" stroke-width="3"/><path d="M2 15H26V36H2Z" fill="#fff" stroke="#999" stroke-width="3"/><path d="M8 23H19V30H8Z" fill="none" stroke="#999" stroke-width="2.500"/></symbol>
  <symbol id="wclose" viewBox="0 0 40 40"><path d="M4 5H13L20 15 27 5H36L25 20 36 35H27L20 25 13 35H4L15 20Z" fill="#fff" stroke="#999" stroke-width="2.500"/></symbol>
  <symbol id="chevup" viewBox="0 0 40 40"><path d="M8 20 20 8 32 20M8 34 20 22 32 34" fill="none" stroke="#222" stroke-width="4"/></symbol>
  <symbol id="lamp" viewBox="0 0 20 40"><rect x="1" y="1" width="18" height="38" rx="8" fill="#4a4a44"/><circle cx="10" cy="11" r="8" fill="#c23a28"/><circle cx="10" cy="28" r="9" fill="#3cc048"/><circle cx="8" cy="25" r="3" fill="#c8f8c8"/></symbol>
  <symbol id="help" viewBox="0 0 40 40"><path d="M3 3H37V37H3Z" fill="#eefaf2" stroke="#2a6a80" stroke-width="3"/><path d="M14 15Q14 8 20 8 27 9 26 15 25 18 20 21V25M20 28V32" fill="none" stroke="#28a04a" stroke-width="5"/></symbol>
  <symbol id="tag" viewBox="0 0 40 40"><path d="M24 2 36 5 38 18 18 38 10 38 3 28 3 20Z" fill="url(#gYel)" stroke="#8a6d14" stroke-width="2"/><circle cx="29" cy="11" r="3" fill="#fff" stroke="#8a6d14" stroke-width="1.500"/><path d="M12 22 20 30M17 18 24 25" stroke="#a88420" stroke-width="2"/></symbol>
</svg>

<main class="slide">
  <header class="slide-head">
    <h1>With the imformation of the measurements use the move tool to locate at origin.</h1>
    <span class="page-no">16</span>
  </header>

  <section class="app">
    <div class="topstrip"></div>
    <div class="ribbon">
      <div class="ribbon-main">
        <button class="big pressed"><svg class="i40"><use href="#sketch"/></svg><span>Sketch</span><i class="dd"></i></button>
        <button class="big dimension"><svg class="i40"><use href="#dim"/></svg><span>Smart<br>Dimension</span><i class="dd"></i></button>
        <div class="toolgrid">
          <button><svg><use href="#line"/></svg></button><i class="dd"></i>
          <button><svg><use href="#circle"/></svg></button><i class="dd"></i>
          <button><svg><use href="#hex"/></svg></button><i></i>
          <button><svg><use href="#fillet"/></svg></button><i class="dd"></i>
          <button><svg><use href="#letter"/></svg></button>
          <button class="on"><svg><use href="#perpq"/></svg></button>
          <button><svg><use href="#circ3"/></svg></button>
          <button><svg><use href="#poly"/></svg></button>
          <button><svg><use href="#flip"/></svg></button>
          <button><svg><use href="#cross"/></svg></button><i></i>
          <button><svg><use href="#surf"/></svg></button>

          <button><svg><use href="#rect"/></svg></button><i class="dd"></i>
          <button><svg><use href="#carc"/></svg></button><i></i>
          <button><svg><use href="#spline"/></svg></button><i class="dd"></i>
          <button><svg><use href="#plane"/></svg></button><i></i>
          <button><svg><use href="#sketchg"/></svg></button>
          <button><svg><use href="#perp"/></svg></button>
          <button><svg><use href="#ucurve"/></svg></button>
          <button><svg><use href="#plusminus"/></svg></button>
          <button><svg><use href="#planepen"/></svg></button>
          <button><svg><use href="#rapid"/></svg></button><i class="dd"></i>
          <button><svg><use href="#splsum"/></svg></button>

          <button><svg><use href="#slot"/></svg></button><i class="dd off"></i>
          <button><svg><use href="#arc3"/></svg></button><i class="dd"></i>
          <button><svg><use href="#ellipse"/></svg></button><i class="dd off"></i>
          <button><svg><use href="#parc"/></svg></button><i></i>
          <button><svg><use href="#star"/></svg></button>
          <button><svg><use href="#perpg"/></svg></button>
          <button><svg><use href="#ncurve"/></svg></button>
          <button><svg><use href="#scale"/></svg></button>
          <button><svg><use href="#rotent"/></svg></button>
          <button><svg><use href="#tape"/></svg></button><i class="dd"></i>
          <button><svg><use href="#cross"/></svg></button>
        </div>
        <button class="big"><svg class="i40"><use href="#trim"/></svg><span><u>T</u>rim<br>Entities</span><i class="dd"></i></button>
        <button class="big"><svg class="i40"><use href="#convert"/></svg><span>Convert<br>Entities</span><i class="dd"></i></button>
        <button class="big low" disabled><svg class="i40"><use href="#offset"/></svg><span>Offset<br>Entities</span></button>
        <div class="list mirror">
          <button disabled><svg><use href="#mirror"/></svg>Mirror Entities</button>
          <button disabled><svg><use href="#dmirror"/></svg>Dynamic Mirror Entities</button>
          <button disabled><svg><use href="#pattern"/></svg>Linear Sketch Pattern<i class="dd off"></i></button>
        </div>
        <div class="list moves">
          <button class="on"><svg><use href="#move"/></svg>Move Entities<i class="dd"></i></button>
          <button><svg><use href="#split"/></svg>Split Entities</button>
          <button><svg><use href="#extend"/></svg>Extend Entities</button>
        </div>
        <button class="big low make" disabled><svg class="i40"><use href="#path"/></svg><span>Make<br>Path</span></button>
        <button class="more">»</button>
      </div>
      <div class="ribbon-side">
        <div class="side-tools"><i class="grip"></i><svg><use href="#inst"/></svg><button class="more2">»</button></div>
      </div>
    </div>

    <div class="workspace">
      <div class="tabrow">
        <nav class="tabs">
          <button>Features</button><button class="active">Sketch</button><button>Surfaces</button><button>Mold Tools</button><button>Evaluate</button><button>DimXpert</button><button>Office Products</button>
        </nav>
        <div class="doc-controls">
          <button aria-label="Previous pane"><svg><use href="#winl"/></svg></button><button aria-label="Next pane"><svg><use href="#winr"/></svg></button><button aria-label="Minimise"><svg><use href="#wmin"/></svg></button><button aria-label="Restore"><svg><use href="#wres"/></svg></button><button aria-label="Close"><svg><use href="#wclose"/></svg></button>
        </div>
      </div>

      <aside class="panel">
        <nav class="ptabs">
          <button><svg><use href="#part"/></svg></button><button class="active"><svg><use href="#prop"/></svg></button><button><svg><use href="#conf"/></svg></button><button><svg><use href="#target"/></svg></button><button><svg><use href="#ball2"/></svg></button>
        </nav>
        <h2 class="ptitle"><svg><use href="#move"/></svg>3D Move<span>?</span></h2>
        <div class="pactions">
          <button aria-label="OK"><svg><use href="#check"/></svg></button><button aria-label="Cancel"><svg><use href="#xmark"/></svg></button><button aria-label="Keep visible"><svg><use href="#pin"/></svg></button>
        </div>
        <section class="group">
          <h3>Entities to Move<svg><use href="#chevup"/></svg></h3>
          <div class="entities">
            <svg><use href="#moveg"/></svg>
            <ul><li>Line4</li><li>Line5</li><li>Spline4</li></ul>
            <label class="keep"><input type="checkbox">Keep relations</label>
          </div>
        </section>
        <section class="group">
          <h3>Translate<svg><use href="#chevup"/></svg></h3>
          <div class="translate">
            <svg><use href="#ybox"/></svg><input class="ref" type="text" aria-label="Reference">
            <label for="dx"><b>Δ</b>X</label><div class="spin"><input id="dx" type="text" value="-1.21mm"><span><i class="up"></i><i class="dd"></i></span></div>
            <label for="dy"><b>Δ</b>Y</label><div class="spin"><input id="dy" type="text" value="-2.50mm"><span><i class="up"></i><i class="dd"></i></span></div>
            <label for="dz"><b>Δ</b>Z</label><div class="spin"><input id="dz" type="text" value="23.80mm"><span><i class="up"></i><i class="dd"></i></span></div>
          </div>
        </section>
        <button class="repeat">Repeat</button>
        <button class="flyout" aria-label="Collapse panel"><i></i><i></i><i></i></button>
      </aside>

      <div class="viewport">
        <svg class="scene" viewBox="331 457 1671 930" preserveAspectRatio="xMinYMin meet">
          <path d="M1139 785Q1184 812 1192 872 1170 890 1139 890T1087 872Q1094 812 1139 785Z" fill="#ee9cec"/>
          <path d="M1139 785Q1184 812 1192 872L1139 846Z" fill="#e690e6"/>
          <g fill="none" stroke="#35a878" stroke-width="3"><path d="M663 632C740 641 850 690 950 733L1139 819C1300 895 1500 1000 1617 1060"/><path d="M663 632 1617 1060"/></g>
          <path d="M1094 825 1139 846M1122 811 1139 819 1178 838M1139 846 1188 868" fill="none" stroke="#9a7a9c" stroke-width="3"/>
          <circle cx="663" cy="632" r="4" fill="#2a9a6c"/><circle cx="1617" cy="1060" r="4" fill="#2a9a6c"/>
          <path d="M1139 840V752" stroke="#2c5c34" stroke-width="4"/><path d="M1139 736 1147 757H1131Z" fill="#14a21c"/><path d="M1139 810 1144 817H1134Z" fill="#8a4a6c"/>
          <path d="M1139 846 1056 894" stroke="#2a1a90" stroke-width="4"/><path d="M1044 901 1056 885 1065 899Z" fill="#2a28a8"/>
          <path d="M1139 846 1222 894" stroke="#d82848" stroke-width="4"/><path d="M1234 901 1213 899 1222 885Z" fill="#d83030"/>
          <circle cx="1139" cy="846" r="8" fill="#52c6ea" stroke="#2a7ca8"/><circle cx="1137" cy="843" r="3" fill="#b8f0ff"/>
          <path d="M412 1280V1244" stroke="#2a7a30" stroke-width="8"/><path d="M412 1230 421 1246 416 1251H408L403 1246Z" fill="#2a9a34"/>
          <path d="M411 1280 384 1296" stroke="#2c2a9c" stroke-width="8"/><path d="M369 1305 378 1289 389 1304Z" fill="#3432b8"/>
          <path d="M413 1280 440 1296" stroke="#b8342c" stroke-width="8"/><path d="M456 1305 446 1289 436 1304Z" fill="#d84030"/>
          <g fill="none" stroke-width="2"><path d="M406 1213 411 1221 416 1213M411 1221V1232" stroke="#3a8a48"/><path d="M358 1298H367L358 1314H367" stroke="#4a4ab0"/><path d="M454 1297 464 1315M464 1297 454 1315" stroke="#c85a50"/></g>
        </svg>
        <div class="viewbar">
          <div>
            <button class="first"><svg><use href="#zfit"/></svg></button><button><svg><use href="#rot"/></svg></button><button><svg><use href="#zarea"/></svg></button><button><svg><use href="#zdyn"/></svg></button><button><svg><use href="#monitor"/></svg></button><button><svg><use href="#torch"/></svg></button><button><svg><use href="#section"/></svg></button><button><svg><use href="#orient"/></svg></button><i class="dd"></i><button><svg><use href="#cube"/></svg></button><i class="dd"></i><button><svg><use href="#glasses"/></svg></button><i class="dd"></i><button class="on"><svg viewBox="0 0 40 40"><path d="M3 27V38H38" fill="none" stroke="#3a45c0" stroke-width="3"/><path d="M4 27 8 19 27 12 32 18 12 27Z" fill="#f6d943" stroke="#6b5a1a" stroke-width="1.500"/><path d="M25 13 29 8Q35 8 36 14L31 18Z" fill="#e59c98" stroke="#8a6664"/><path d="M3 28 6 23 9 27Z" fill="#222"/><path d="M30 20V28" stroke="#2a8a3a" stroke-width="3"/><path d="M30 28 38 29" stroke="#c33" stroke-width="3"/><path d="M30 28 25 33" stroke="#223a8a" stroke-width="3"/><text class="t3d" x="1" y="14">3D</text></svg></button><button><svg><use href="#light"/></svg></button><button><svg><use href="#extend"/></svg></button><button><svg><use href="#circtan"/></svg></button><i class="dd"></i><button><svg><use href="#slot"/></svg></button><button><svg><use href="#slot2"/></svg></button><button><svg><use href="#slot3"/></svg></button><button><svg><use href="#slot4"/></svg></button><button><svg><use href="#dot"/></svg></button><button><svg><use href="#tarc"/></svg></button>
          </div>
          <div>
            <button><svg><use href="#ball"/></svg></button><button><svg><use href="#scale"/></svg></button><button><svg><use href="#step"/></svg></button><button><svg><use href="#split"/></svg></button><button><svg><use href="#scene"/></svg></button><i class="dd"></i><button><svg><use href="#monhand"/></svg></button><i class="dd"></i>
          </div>
          <div>
            <button><svg><use href="#sketchg"/></svg></button><button><svg><use href="#pan"/></svg></button><button><svg><use href="#box3"/></svg></button><button class="lit"><svg><use href="#box4"/></svg></button><button class="lit narrow" aria-label="More views"><i class="dd"></i></button>
          </div>
        </div>
        <nav class="taskpane">
          <button><svg><use href="#chat"/></svg></button><button><svg><use href="#home"/></svg></button><button><svg><use href="#books"/></svg></button><button><svg><use href="#folder"/></svg></button><button><svg><use href="#palette"/></svg></button><button class="active"><svg><use href="#ball"/></svg></button><button><svg><use href="#hand"/></svg></button>
        </nav>
        <button class="confirm" aria-label="Accept"><svg><use href="#check"/></svg></button>
        <button class="confirm reject" aria-label="Reject"><svg><use href="#xthin"/></svg></button>
        <p class="viewname">*Isometric</p>
      </div>
    </div>

    <nav class="sheets">
      <button class="nav" aria-label="First"><svg viewBox="0 0 20 20"><path d="M4 2V18M16 3V17L7 10Z"/></svg></button><button class="nav" aria-label="Previous"><svg viewBox="0 0 20 20"><path d="M14 3V17L6 10Z"/></svg></button><button class="nav" aria-label="Next"><svg viewBox="0 0 20 20"><path d="M6 3V17L14 10Z"/></svg></button><button class="nav" aria-label="Last"><svg viewBox="0 0 20 20"><path d="M16 2V18M4 3V17L13 10Z"/></svg></button>
      <button class="sheet active">Model</button><button class="sheet">Motion Study 1</button>
    </nav>
    <footer class="status">
      <span class="edition">SolidWorks Student Edition - Academic Use Only</span>
      <span>-101.75mm</span><span>-92.82mm 194.55mm</span><span>Under Defined</span>
      <svg class="lampicon"><use href="#lamp"/></svg>
      <span>Custom</span><i class="up"></i>
      <svg><use href="#help"/></svg><svg><use href="#tag"/></svg>
      <svg class="resize" viewBox="0 0 18 18"><g fill="#c3c6ca"><path d="M13 1h3v3h-3zM13 7h3v3h-3zM13 13h3v3h-3zM7 7h3v3H7zM7 13h3v3H7zM1 13h3v3H1z"/></g></svg>
    </footer>
    <div class="frame-bottom"></div>
  </section>

  <svg class="pointer" viewBox="0 0 250 156" aria-hidden="true"><path d="M4 4 232 142" stroke="#000" stroke-width="5"/><path d="M247 151 231 126 229 140 218 148Z"/></svg>
</main>
<p class="date">Thursday, 29 October 2015</p>
</body>
</html>
```
FILE: styles.css
```css
* { box-sizing: border-box; }
body {
  margin: 0;
  min-height: 100vh;
  display: flex;
  flex-direction: column;
  background: #fff;
  color: #3c4046;
  font: 20px/30px "Open Sans", "Noto Sans", sans-serif;
}
h1, h2, h3, p, ul { margin: 0; padding: 0; }
button, input { font: inherit; color: inherit; margin: 0; }
button { padding: 0; border: 0; background: none; }
svg { display: block; flex: none; }
.sprite { position: absolute; width: 0; height: 0; }

/* slide */
.slide {
  position: relative;
  flex: 1;
  display: flex;
  flex-direction: column;
  border: 1px solid #444;
  border-bottom-width: 2px;
}
.slide-head {
  display: flex;
  justify-content: space-between;
  min-height: 251px;
  padding: 45px 112px 0 47px;
  color: #000;
  font-family: Lato, sans-serif;
}
.slide-head h1 { font-size: 45px; line-height: 60px; font-weight: 400; white-space: nowrap; }
.page-no { font-size: 72px; line-height: 92px; padding-top: 42px; }
.pointer { position: absolute; left: 1209px; top: 114px; width: 250px; height: 156px; }
.date { height: 38px; padding-left: 14px; color: #000; font: 24px/36px "Liberation Sans", sans-serif; }

/* application window */
.app {
  flex: 1;
  display: flex;
  flex-direction: column;
  margin: 0 29px 61px;
  padding-right: 16px;
  border-left: 1px solid #4d7f9c;
  background: linear-gradient(90deg, #123a66 0 1px, #8dbce6 1px 2px, #3d87cb 2px 10px, #a9d0f0 10px 12px, #1d5f9f 12px) right / 16px 100% no-repeat;
}
.topstrip { height: 11px; background: #e2e4e8; border-bottom: 1px solid #a9adb2; }
.ribbon { display: flex; height: 164px; background: #e3e5e9; }
.ribbon-main {
  flex: 1;
  display: flex;
  padding: 3px 0 0 15px;
  border-right: 2px solid #8b8f94;
  border-bottom: 2px solid #3e4347;
  border-top: 1px solid #f5f6f8;
}
.ribbon-side { width: 107px; border-top: 2px solid #f5f6f8; }
.side-tools { display: flex; align-items: center; height: 62px; border-right: 1px solid #a9adb2; border-bottom: 1px solid #a9adb2; }
.side-tools svg { width: 36px; height: 40px; }
.side-tools .grip { width: 3px; height: 48px; margin: 0 16px 0 5px; background: repeating-linear-gradient(#666 0 3px, transparent 3px 7px); }
.more, .more2 { font-size: 30px; color: #75797d; }
.more2 { margin-left: 14px; padding-bottom: 8px; }
.more { margin-left: auto; padding-bottom: 12px; }

.dd { display: block; width: 0; height: 0; border: 5px solid transparent; border-top-color: #4a4e52; border-bottom: 0; margin: auto; }
.dd.off { border-top-color: #a4a7aa; }
.up { display: block; width: 0; height: 0; border: 5px solid transparent; border-bottom-color: #4a4e52; border-top: 0; margin: auto; }

.big {
  display: flex;
  flex-direction: column;
  align-items: center;
  width: 89px;
  height: 150px;
  padding: 7px 0;
  flex: none;
}
.big .i40 { width: 38px; height: 38px; margin-bottom: 2px; }
.big .dd { margin: auto auto 3px; }
.big.pressed {
  width: 79px;
  padding-top: 4px;
  border: 1px solid #808488;
  border-top-width: 2px;
  background: linear-gradient(#c6c9cc, #d3d6d9) top / 100% 126px no-repeat #eef0f2;
}
.big.dimension { width: 119px; padding-right: 2px; }
.big.low { padding-top: 18px; }
.big:disabled, .list button:disabled { color: #9da0a4; }
.big.make { width: 117px; border-left: 2px solid #9b9ea2; height: 146px; }

.toolgrid {
  display: grid;
  grid-template-columns: 48px 24px 48px 24px 50px 22px 48px 24px 48px 51px 51px 51px 51px 50px 20px 52px;
  grid-auto-rows: 50px;
  border-left: 1px solid #6d7175;
  border-right: 2px solid #8b8f94;
  height: 148px;
}
.toolgrid button { display: grid; place-items: center; }
.toolgrid svg, .list svg { width: 38px; height: 38px; }
.toolgrid .on { border: 2px solid #6f7377; background: #bfc1c5; }

.list { display: grid; grid-template-rows: repeat(3, 50px); font-size: 21px; }
.list button { display: flex; align-items: center; gap: 8px; text-align: left; white-space: nowrap; }
.mirror { width: 316px; padding-left: 4px; }
.mirror .dd { margin-right: 12px; }
.moves { width: 222px; padding-right: 4px; }
.moves button { padding-left: 6px; }
.moves svg { width: 36px; }
.moves .on { border: 2px solid #808488; padding-left: 4px; background: linear-gradient(90deg, #c4c6c9 191px, #eef0f2 191px); }
.moves .dd { margin-right: 8px; }

/* tabs above the work area */
.workspace { flex: 1; display: grid; grid-template: 31px 1fr / 300px 1fr; background: #fff; border-right: 1px solid #22384e; margin-right: -1px; }
.tabrow { grid-column: 1 / 3; display: flex; justify-content: space-between; z-index: 1; }
.tabs { display: grid; grid-template-columns: 119px 105px 119px 148px 117px 129px 190px; font-size: 23px; height: 31px; }
.tabs button { background: #bfc1c4; border: 1px solid #4a4e52; border-width: 1px 1px 2px 0; line-height: 26px; white-space: nowrap; }
.tabs .active { background: #e6e8eb; border-top: 0; font-weight: 700; color: #23262a; margin-top: -2px; }
.doc-controls { display: flex; align-items: center; padding: 12px 14px 0 0; gap: 8px; }
.doc-controls svg { width: 28px; height: 26px; }

/* property panel */
.panel { position: relative; background: #ebecf0; border-right: 3px solid #8f9297; border-top: 1px solid #888c96; border-bottom: 3px solid #c3c6d0; padding-top: 13px; }
.ptabs { display: flex; border-bottom: 1px solid #3e4347; margin-left: 1px; }
.ptabs button { display: grid; place-items: center; width: 54px; height: 41px; background: #c0c2c5; border: 2px solid #3e4347; border-width: 2px 2px 0 0; }
.ptabs .active { background: #f1f2f6; height: 42px; margin-bottom: -1px; }
.ptabs svg { width: 30px; height: 30px; }
.ptitle { display: flex; align-items: center; gap: 5px; height: 37px; margin: 9px 4px 0; padding: 0 9px 0 3px; border: 2px solid #4a4e52; background: #c0c2c5; font-size: 23px; }
.ptitle svg { width: 26px; height: 26px; }
.ptitle span { margin-left: auto; color: #f6f7f8; }
.pactions { display: flex; align-items: flex-start; gap: 17px; height: 56px; padding: 11px 0 0 7px; }
.pactions svg { width: 24px; height: 24px; }
.group { margin: 0 6px 20px 5px; border: 2px solid #4a4e52; background: #e2e4e8; }
.group h3 { display: flex; align-items: center; justify-content: space-between; height: 36px; padding: 0 5px; background: #c0c2c5; border-bottom: 2px solid #4a4e52; font-size: 20px; }
.group h3 svg { width: 20px; height: 22px; }
.entities { display: grid; grid-template-columns: 60px 206px; padding: 5px 0 4px; height: 169px; }
.entities > svg { width: 32px; height: 32px; margin: 2px 0 0 8px; }
.entities ul { height: 117px; padding: 4px 6px; list-style: none; background: #dcecfb; border: 2px solid #8dc3e6; outline: 1px solid #c3e0f4; font-size: 19px; line-height: 27px; }
.keep { grid-column: 2; display: flex; align-items: center; gap: 5px; height: 26px; margin-top: 14px; white-space: nowrap; }
.keep input { appearance: none; width: 25px; height: 25px; border: 1px solid #a9adb2; background: linear-gradient(135deg, #dcdee0, #fff); box-shadow: inset 0 0 0 3px #f4f4f4; }
.translate { display: grid; grid-template-columns: 67px 203px; grid-template-rows: 44px; grid-auto-rows: 43px; row-gap: 8px; padding: 5px 0 4px; color: #17191c; }
.translate > svg { width: 30px; height: 30px; margin: 5px 0 0 9px; }
.translate input { min-width: 0; border: 0; background: #fff; }
.translate .ref { border: 2px solid #a5aab4; }
.translate label { padding: 3px 0 0 8px; font: 600 22px/30px "Open Sans", sans-serif; }
.translate label b { font-weight: 400; color: #5a5d61; }
.spin { display: grid; grid-template-columns: 170px 28px; }
.spin input { padding: 0 8px 3px; border-top: 2px solid #cfd2d7; color: #787b7f; font-size: 19px; }
.spin span { display: grid; background: #f4f5f6; border-left: 1px solid #e2e4e8; }
.repeat { display: block; width: 172px; height: 40px; margin: 57px 0 0 69px; border: 2px solid #a0a3a7; border-radius: 4px; background: linear-gradient(#f8f8f8 50%, #dfe0e1); color: #2c2f33; }
.flyout { position: absolute; left: 298px; top: 418px; display: flex; flex-direction: column; justify-content: center; gap: 4px; width: 14px; height: 62px; background: #ebecf0; border: 2px solid #5b5f64; border-left: 0; z-index: 2; }
.flyout i { border: 5px solid transparent; border-right-color: #333; border-left: 0; width: 5px; margin-left: 4px; }

/* graphics area */
.viewport { position: relative; display: flex; flex-direction: column; min-width: 0; }
.scene { position: absolute; inset: 0; width: 100%; height: 100%; }
.viewbar { position: relative; display: flex; justify-content: space-between; margin-top: 14px; height: 50px; overflow: hidden; }
.viewbar > div { display: flex; }
.viewbar button { display: grid; place-items: center; width: 50px; flex: none; }
.viewbar .first { margin-left: -9px; }
.viewbar svg { width: 38px; height: 38px; opacity: .88; }
.viewbar .dd { margin: 24px 8px 0; opacity: .8; }
.viewbar .on { border: 2px solid #6f7377; background: #bfc1c5; }
.viewbar .lit { background: #dcdee1; border: 1px solid #8b8f94; border-bottom: 0; }
.viewbar .narrow { width: 17px; border-left: 0; border-right: 0; }
.viewbar .narrow .dd { margin: auto; }
.t3d { font-size: 16px; font-weight: 700; fill: #d82222; }
.taskpane { position: relative; display: flex; flex-direction: column; align-self: flex-end; width: 68px; }
.taskpane button { display: grid; place-items: center; height: 63px; padding-right: 6px; background: #c3c4c8; border: 2px solid #5b5f64; border-right: 0; border-top-width: 0; box-shadow: inset 1px 1px #e6e7ea; }
.taskpane .active { background: #f1f3fa; }
.taskpane svg { width: 27px; height: 27px; }
.confirm { position: absolute; right: 117px; top: 74px; opacity: .22; }
.confirm svg { width: 40px; height: 38px; }
.confirm.reject { right: 68px; top: 124px; }
.confirm.reject svg { width: 38px; }
.viewname { position: absolute; left: 19px; bottom: 2px; color: #222; font: 29px/30px Lato, sans-serif; }

/* sheet tabs and status bar */
.sheets { display: flex; height: 32px; padding-left: 3px; background: #ebecf0; border-top: 2px solid #6a6d72; border-bottom: 1px solid #4a4e52; }
.sheets .nav { width: 29px; height: 29px; margin-right: 3px; background: #c9cbd6; border: 1px solid #dfe1e9; display: grid; place-items: center; }
.sheets .nav svg { width: 18px; height: 20px; fill: #a3a6b3; stroke: #a3a6b3; }
.sheet { width: 223px; height: 27px; padding-right: 16px; line-height: 26px; font-size: 23px; background: #d3d5df; border: 2px solid #74777e; border-width: 0 2px 2px 0; }
.sheet.active { width: 117px; height: 29px; padding: 0; margin-left: 4px; background: #ebecf0; border-left-width: 2px; font-weight: 700; color: #1b1d20; }
.status {
  display: grid;
  grid-template-columns: 1fr 163px 257px 205px 75px 107px 35px 100px 52px 19px;
  align-items: center;
  height: 35px;
  padding: 2px 0 0 4px;
  background: #e3e5e8;
  font-size: 22px;
  white-space: nowrap;
}
.status .edition { font-size: 23px; }
.status svg { width: 24px; height: 24px; margin-bottom: 8px; }
.status .lampicon { width: 18px; height: 24px; }
.status .up { margin: 0; }
.status .resize { width: 18px; height: 18px; margin: 12px 0 0; }
.frame-bottom {
  height: 20px;
  margin: 0 -16px 0 -1px;
  background:
    linear-gradient(16deg, transparent 38%, rgba(244, 240, 240, .9) 50%, transparent 62%) 1400px 0 / 150px 20px no-repeat,
    linear-gradient(#3f6f8c 0 1px, transparent 1px 11px, rgba(240, 255, 255, .8) 11px 12px, rgba(0, 50, 90, .45) 12px 14px, rgba(0, 80, 140, .25) 14px),
    linear-gradient(90deg, #5fe0f0, #8ae8f8 20%, #7fd8f6 38%, #45a8e8 65%, #3c8fdc 85%, #2f7fd0);
}
```
